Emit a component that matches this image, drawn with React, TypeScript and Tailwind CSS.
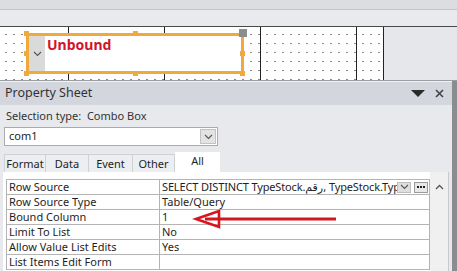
import React from "react";

const rows: [string, React.ReactNode][] = [
  ["Row Source", null],
  ["Row Source Type", "Table/Query"],
  ["Bound Column", "1"],
  ["Limit To List", "No"],
  ["Allow Value List Edits", "Yes"],
  ["List Items Edit Form", ""],
];

function Chevron({ className = "" }: { className?: string }) {
  return (
    <svg width="9" height="6" viewBox="0 0 9 6" className={className}>
      <path d="M1 1 L4.5 4.5 L8 1" fill="none" stroke="#555" strokeWidth="1.1" />
    </svg>
  );
}

function Handle({ cls }: { cls: string }) {
  return <div className={`absolute w-[5px] h-[5px] bg-[#f2a93b] ${cls}`} />;
}

export default function App() {
  return (
    <div
      className="relative w-[457px] h-[271px] overflow-hidden bg-[#e6e7eb] text-[#1e1e1e]"
      style={{ fontFamily: '"Noto Sans", "DejaVu Sans", sans-serif' }}
    >
      {/* top bands */}
      <div className="h-[9px] bg-[#dcdde1]" />
      <div className="h-px bg-[#c3c4c8]" />
      <div className="h-[16px] bg-[#e9eaee]" />
      <div className="h-px bg-[#4a4a4a]" />
      {/* design grid */}
      <div className="relative flex h-[53px]">
        {[69, 96, 96, 96, 27].map((w, i) => (
          <div
            key={i}
            style={{ width: w }}
            className="h-full border-r border-[#222] bg-white bg-[radial-gradient(#8a8a8a_0.6px,transparent_0.8px)] bg-[length:8px_9px] bg-[position:2px_3px]"
          />
        ))}
        <div className="flex-1 bg-[#e6e7eb]" />
        {/* combo control */}
        <div className="absolute left-[26px] top-[6px] w-[218px] h-[41px] border-[3px] border-[#f2a93b] bg-white flex">
          <div className="w-[16px] h-full bg-[#dadada] flex items-center justify-center">
            <Chevron />
          </div>
          <div className="pl-[2px] text-[14px] leading-[18px] font-bold text-[#d3132c]">Unbound</div>
        </div>
        <Handle cls="left-[24px] top-[4px]" />
        <Handle cls="left-[24px] top-[24px]" />
        <Handle cls="left-[24px] top-[44px]" />
        <Handle cls="left-[133px] top-[4px]" />
        <Handle cls="left-[133px] top-[44px]" />
        <Handle cls="left-[240px] top-[24px]" />
        <Handle cls="left-[240px] top-[44px]" />
        <div className="absolute left-[239px] top-[2px] w-[8px] h-[8px] bg-[#8a8c90]" />
      </div>
      <div className="h-[1px] bg-[#9d9ea2]" />
      {/* property sheet */}
      <div className="flex h-[190px]">
        <div className="w-[452px] flex flex-col bg-[#e7e9ed] border-t border-[#f2f3f5]">
          <div className="h-[23px] bg-[#d3d7dd] flex items-center pl-[5px] pr-[8px]">
            <span className="text-[12.5px] text-[#333]">Property Sheet</span>
            <div className="ml-auto flex items-center gap-[10px]">
              <svg width="14" height="8" viewBox="0 0 14 8">
                <path d="M0 0 H14 L7 7 Z" fill="#2a2a2a" />
              </svg>
              <svg width="9" height="9" viewBox="0 0 9 9">
                <path d="M1 1 L8 8 M8 1 L1 8" stroke="#444" strokeWidth="1.6" />
              </svg>
            </div>
          </div>
          <div className="pl-[6px] pt-[3px] h-[20px] text-[11px] leading-[16px] text-[#333]">
            Selection type:&nbsp;&nbsp;Combo Box
          </div>
          <div className="ml-[4px] mt-[2px] w-[214px] h-[19px] bg-white border border-[#a9abb0] flex items-center">
            <span className="pl-[4px] text-[11px]">com1</span>
            <div className="ml-auto mr-[1px] w-[16px] h-[15px] bg-[#e3e3e3] border border-[#c2c2c2] flex items-center justify-center">
              <Chevron />
            </div>
          </div>
          {/* tabs */}
          <div className="mt-[6px] ml-[4px] flex items-end h-[20px] text-[11px]">
            {[
              ["Format", 42],
              ["Data", 43],
              ["Event", 44],
              ["Other", 42],
            ].map(([t, w]) => (
              <div
                key={t as string}
                style={{ width: w as number }}
                className="h-[18px] border-r border-t border-[#cfd1d5] first:border-l bg-[#eceef1] flex items-center justify-center leading-[16px]"
              >
                {t}
              </div>
            ))}
            <div className="w-[45px] h-[20px] bg-white flex items-start justify-center pt-[1px] leading-[16px]">All</div>
          </div>
          {/* content */}
          <div className="flex-1 ml-[3px] mr-[3px] bg-white flex">
            <div className="flex-1 pl-[3px] pt-[7px]">
              <div className="border-l border-t border-r border-[#b4b4b4] text-[11px] leading-[14px]">
                {rows.map(([label, val], i) => (
                  <div key={i} className="flex h-[15px] border-b border-[#b4b4b4]">
                    <div className="w-[153px] shrink-0 pl-[2px] border-r border-[#b4b4b4] whitespace-nowrap overflow-hidden">
                      {label}
                    </div>
                    <div className="flex-1 pl-[2px] flex items-center overflow-hidden whitespace-nowrap">
                      {i === 0 ? (
                        <>
                          <span className="w-[234px] shrink-0 tracking-[-0.15px]">
                            SELECT DISTINCT TypeStock.رقم, TypeStock.Typ
                          </span>
                          <div className="ml-[1px] w-[14px] h-[11px] bg-[#dedede] border border-[#bdbdbd] flex items-center justify-center">
                            <Chevron />
                          </div>
                          <div className="ml-[3px] w-[14px] h-[11px] bg-[#e8e8e8] border border-[#9a9a9a] flex items-center justify-center">
                            <svg width="8" height="2" viewBox="0 0 8 2">
                              <rect x="0" y="0" width="2" height="2" fill="#222" />
                              <rect x="3" y="0" width="2" height="2" fill="#222" />
                              <rect x="6" y="0" width="2" height="2" fill="#222" />
                            </svg>
                          </div>
                        </>
                      ) : (
                        val
                      )}
                    </div>
                  </div>
                ))}
              </div>
            </div>
            <div className="w-[19px] bg-[#f0f0f0] border-r border-[#c9cacd] flex justify-center pt-[12px]">
              <svg width="9" height="6" viewBox="0 0 9 6">
                <path d="M1 5 L4.5 1.5 L8 5" fill="none" stroke="#555" strokeWidth="1.3" />
              </svg>
            </div>
          </div>
        </div>
        <div className="flex-1 bg-[#8b8c90]" />
      </div>
      {/* red arrow annotation */}
      <svg className="absolute left-0 top-0 pointer-events-none" width="457" height="271">
        <path d="M196 219 L219 211 L219 227 Z" fill="none" stroke="#d9141c" strokeWidth="2.6" strokeLinejoin="miter" />
        <line x1="205" y1="219" x2="336" y2="219" stroke="#d1181f" strokeWidth="3" />
      </svg>
    </div>
  );
}
